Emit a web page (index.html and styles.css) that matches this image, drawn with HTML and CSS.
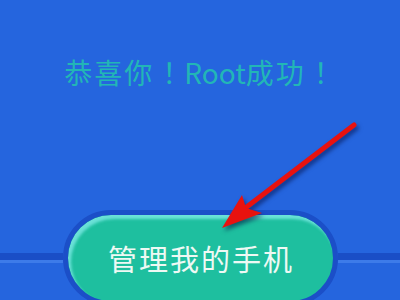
FILE: index.html
```html
<!DOCTYPE html>
<html lang="zh-CN">
<head>
<meta charset="UTF-8" />
<meta name="viewport" content="width=device-width, initial-scale=1" />
<title>Root成功</title>
<link rel="stylesheet" href="styles.css">
</head>
<body>
  <main class="screen">
    <h1 class="title"><span>恭喜你</span><span class="bang" lang="zh-TW">！</span><span class="latin">Root</span><span>成功</span><span class="bang" lang="zh-TW">！</span></h1>

    <div class="action">
      <span class="rail"></span>
      <button class="pill" type="button">管理我的手机</button>
      <span class="rail"></span>
    </div>

    <!-- hint arrow drawn over the screen -->
    <svg class="arrow" width="400" height="300" viewBox="0 0 400 300">
      <line x1="354" y1="125" x2="244" y2="209" stroke="#e8120f" stroke-width="5" stroke-linecap="round" />
      <polygon points="222,228 242,195 246,208 262,213" fill="#e8120f" />
    </svg>
  </main>
</body>
</html>
```

FILE: styles.css
```css
/* Base reset */
* {
  box-sizing: border-box;
}
body {
  margin: 0;
  background: #2565de;
}
.screen {
  position: relative;
  width: 400px;
  height: 300px;
  overflow: hidden;
  background: #2565de;
  font-family: "Noto Sans CJK SC", sans-serif;
}
.title {
  display: flex;
  justify-content: center;
  margin: 0;
  padding-top: 54px;
  height: 90px;
  line-height: 36px;
  font-size: 28px;
  font-weight: 400;
  letter-spacing: 2px;
  color: #22b6b6;
}
.title .latin {
  letter-spacing: 0;
}
.title .bang {
  width: 30px;
  font-family: "Noto Sans CJK TC", sans-serif;
  letter-spacing: 0;
  text-align: center;
}
.action {
  display: flex;
  align-items: center;
  margin-top: 120px;
}
.rail {
  flex: 1;
  height: 10px;
  background: linear-gradient(#1a4ec6 0, #1a4ec6 7px, #3d7be9 7px, #3d7be9 10px);
}
.pill {
  width: 275px;
  height: 96px;
  flex: none;
  border: 5px solid #1b4fc8;
  border-radius: 48px;
  background: #1ebf9f;
  box-shadow: inset 3px 4px 3px rgba(140, 240, 240, 0.7);
  color: #eef9f4;
  font-family: inherit;
  font-size: 29px;
  letter-spacing: 2px;
  padding: 0 0 0 2px;
  cursor: pointer;
}
.arrow {
  position: absolute;
  left: 0;
  top: 0;
  filter: drop-shadow(2px 3px 2px rgba(0, 10, 60, 0.55));
}
```
